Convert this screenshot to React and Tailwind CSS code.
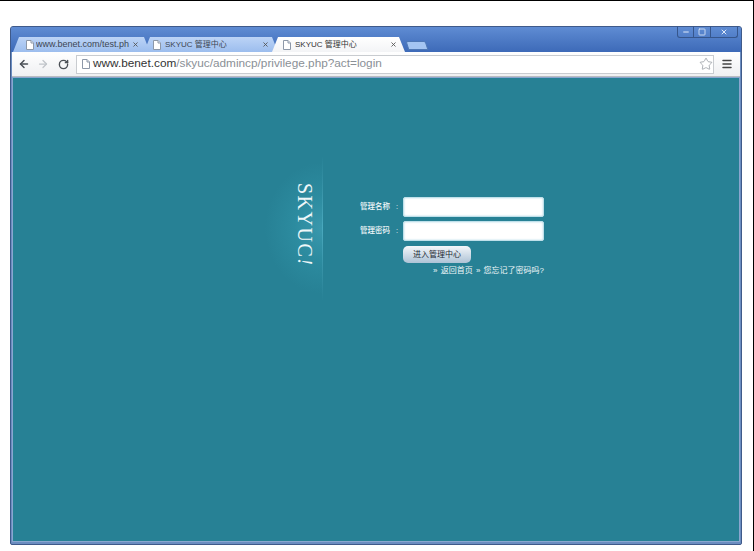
import React from "react";
import { ArrowLeft, ArrowRight, RotateCw, Star, Menu, X, Minus, Square } from "lucide-react";

const cjk = "font-['Liberation_Sans','Noto_Sans_CJK_SC',sans-serif]";

const PageIcon = () => (
  <svg width="8" height="10" viewBox="0 0 8 10" className="shrink-0">
    <path d="M.5 .5h4.500l2.500 2.500v6.500h-7z" fill="#fff" stroke="#8d98a8" />
    <path d="M5 .5v2.500h2.500" fill="#e8edf3" stroke="#8d98a8" />
  </svg>
);

const Tab = ({ title, active, className, gap }) => (
  <div
    className={`flex items-center h-[15px] shrink-0 -mr-[6px] [clip-path:polygon(0_100%,6px_0,calc(100%-6px)_0,100%_100%)] ${cjk} ${
      active ? "bg-gradient-to-b from-white to-[#f3f4f6] text-[#333]" : "bg-gradient-to-b from-[#bcd4f6] to-[#9cbdee] text-[#3d4652]"
    } ${className}`}
  >
    <PageIcon />
    <span className={`overflow-hidden whitespace-nowrap flex-1 ${gap}`}>{title}</span>
    <X size={7} strokeWidth={3} className="shrink-0 text-[#555]" />
  </div>
);

export default function App() {
  return (
    <div className="w-[754px] h-[551px] bg-white border-t border-t-black border-r border-r-black overflow-hidden">
      <div className="mt-[25px] ml-[10px] w-[732px] h-[519px] rounded-t-[3px] rounded-b-[2px] border border-[#3f5a8a] bg-[#6b8dc0] flex flex-col">
        <div className="h-[25px] shrink-0 flex items-end pl-[2px] relative bg-gradient-to-b from-[#5f8cd3] to-[#3d6ab8] rounded-t-[2px]">
          <Tab title="www.benet.com/test.ph" gap="ml-[2px]" className="w-[137px] pl-[13px] pr-[11px] text-[9px]" />
          <Tab title="SKYUC 管理中心" gap="ml-[4px]" className="w-[134px] pl-[9px] pr-[9px] text-[8px]" />
          <Tab title="SKYUC 管理中心" gap="ml-[4px]" active className="w-[133px] pl-[11px] pr-[8px] text-[8px] z-10" />
          <div className="ml-[8px] mb-[2px] w-[20px] h-[9px] bg-[#a4c5f2] border border-[#4e78b5] rounded-t-[2px] [transform:skewX(18deg)]" />
          <div className="absolute right-[3px] top-[-1px] flex h-[12px] w-[61px] border border-t-0 border-[#36568c] rounded-b-[3px] text-[#dfe9f9]">
            <div className="w-[16px] flex items-center justify-center border-r border-[#36568c]">
              <Minus size={8} strokeWidth={3} />
            </div>
            <div className="w-[17px] flex items-center justify-center border-r border-[#36568c]">
              <Square size={8} strokeWidth={2.5} />
            </div>
            <div className="flex-1 flex items-center justify-center">
              <X size={8} strokeWidth={3} />
            </div>
          </div>
        </div>

        <div className="mx-[1px] h-[25px] shrink-0 bg-gradient-to-b from-white to-[#eff0f2] flex items-center pl-[6px] pr-[6px] border-b border-[#b9bcc1]">
          <ArrowLeft size={12} strokeWidth={3} className="text-[#4a4f55]" />
          <ArrowRight size={12} strokeWidth={2.5} className="ml-[7px] text-[#c0c4c9]" />
          <RotateCw size={11} strokeWidth={3} className="ml-[9px] text-[#4a4f55]" />
          <div className="ml-[7px] w-[638px] h-[19px] bg-white border border-[#c9ccd0] flex items-center pl-[5px]">
            <PageIcon />
            <span className="ml-[3px] text-[11.8px] leading-none whitespace-nowrap text-[#8a8f96] font-['Liberation_Sans',sans-serif]">
              <span className="text-[#333]">www.benet.com</span>/skyuc/admincp/privilege.php?act=login
            </span>
            <Star size={14} strokeWidth={1.2} className="ml-auto text-[#8a8f96]" />
          </div>
          <Menu size={12} strokeWidth={3} className="ml-[7px] text-[#444]" />
        </div>

        <div className="mx-[1px] mb-[2px] flex-1 border border-[#8aa6cf] bg-[#278195] flex items-start pt-[77px]">
          <div className="relative ml-[252px] w-[58px] h-[146px] shrink-0 flex items-start justify-end pr-[8px] pt-[28px] bg-[radial-gradient(ellipse_100%_45%_at_100%_50%,#3a98ad_0%,#2c8b9f_50%,#278195_100%)]">
            <span className="[writing-mode:vertical-rl] text-[20px] leading-[20px] tracking-[1.5px] text-[#eef7f9] font-['Liberation_Serif',serif]">
              SKYUC<span className="italic">!</span>
            </span>
            <div className="absolute right-0 top-0 bottom-0 w-px bg-gradient-to-b from-[#278195] via-[#4aa9be] to-[#278195]" />
          </div>

          <div className={`ml-[37px] pt-[42px] w-[184px] text-[#f0f7f9] ${cjk}`}>
            <div className="flex items-center h-[20px] text-[7.5px] font-medium">
              <span className="w-[43px] whitespace-nowrap">
                管理名称<span className="ml-[6px]">:</span>
              </span>
              <input className="w-[141px] h-[20px] bg-white rounded-[2px] border border-[#bfe0ea] shadow-[inset_0_0_2px_#a8d4e2]" />
            </div>
            <div className="flex items-center h-[20px] mt-[4px] text-[7.5px] font-medium">
              <span className="w-[43px] whitespace-nowrap">
                管理密码<span className="ml-[6px]">:</span>
              </span>
              <input className="w-[141px] h-[20px] bg-white rounded-[2px] border border-[#bfe0ea] shadow-[inset_0_0_2px_#a8d4e2]" />
            </div>
            <button className="block ml-[43px] mt-[5px] w-[68px] h-[17px] rounded-[5px] bg-gradient-to-b from-[#f4f7fa] to-[#aec3d6] text-[8px] text-[#1d2a33] leading-none">
              进入管理中心
            </button>
            <div className="mt-[2px] text-right text-[8px] whitespace-nowrap leading-[12px] [word-spacing:1px]">
              » 返回首页 » 您忘记了密码吗?
            </div>
          </div>
        </div>
      </div>
    </div>
  );
}
